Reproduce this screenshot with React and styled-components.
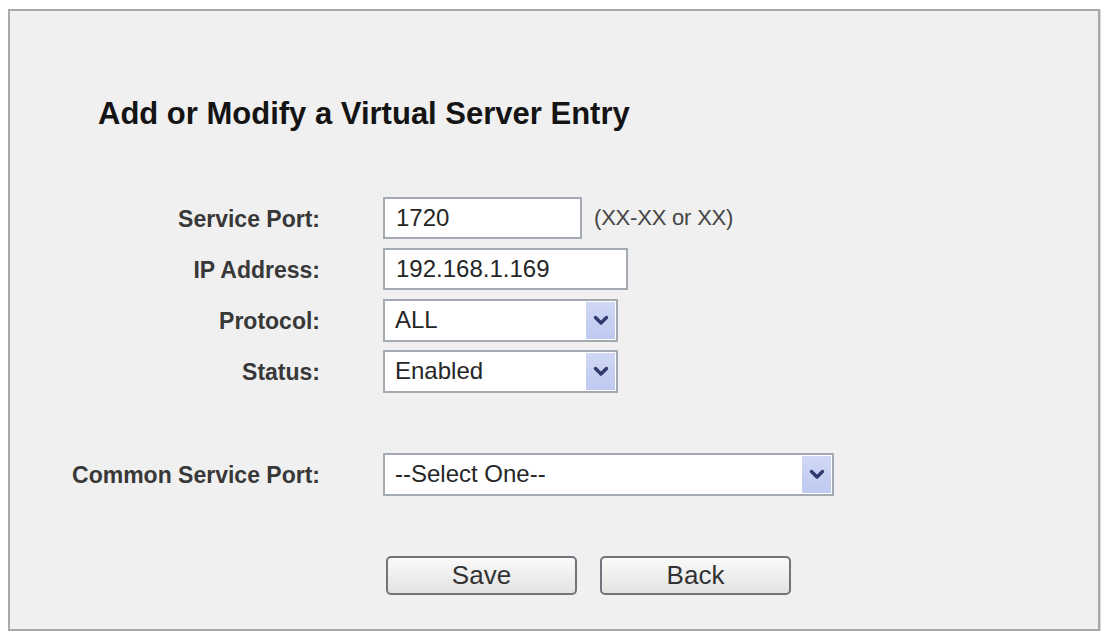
import React from 'react';
import styled, { createGlobalStyle } from 'styled-components';

const GlobalStyle = createGlobalStyle`
  html, body {
    margin: 0;
    padding: 0;
    background: #ffffff;
  }
  body {
    font-family: "Liberation Sans", Arial, sans-serif;
  }
`;

const Chevron = () => (
    <svg width="16" height="11" viewBox="0 0 16 11">
        <polyline points="2.5,2.5 8,8 13.5,2.5" fill="none" stroke="#2c3a6c" strokeWidth="3.4" strokeLinecap="round" strokeLinejoin="round"/>
    </svg>
);

const App = () => {
    return (
        <>
            <GlobalStyle/>
            <Panel>
                <Title>Add or Modify a Virtual Server Entry</Title>
                <Form>
                    <Label>Service Port:</Label>
                    <Field>
                        <TextInput width={199} defaultValue="1720" readOnly/>
                        <Hint>(XX-XX or XX)</Hint>
                    </Field>

                    <Label>IP Address:</Label>
                    <Field>
                        <TextInput width={245} defaultValue="192.168.1.169" readOnly/>
                    </Field>

                    <Label>Protocol:</Label>
                    <Field>
                        <SelectBox width={235}>
                            <SelectValue>ALL</SelectValue>
                            <ArrowButton><Chevron/></ArrowButton>
                        </SelectBox>
                    </Field>

                    <Label>Status:</Label>
                    <Field>
                        <SelectBox width={235}>
                            <SelectValue>Enabled</SelectValue>
                            <ArrowButton><Chevron/></ArrowButton>
                        </SelectBox>
                    </Field>

                    <Label spaced>Common Service Port:</Label>
                    <Field spaced>
                        <SelectBox width={451}>
                            <SelectValue>--Select One--</SelectValue>
                            <ArrowButton><Chevron/></ArrowButton>
                        </SelectBox>
                    </Field>
                </Form>
                <ButtonRow>
                    <Button>Save</Button>
                    <Button>Back</Button>
                </ButtonRow>
            </Panel>
        </>
    )
}
export default App;

const Panel = styled.div`
  box-sizing: border-box;
  margin: 9px 6px 0 8px;
  height: 622px;
  background: #f0f0f0;
  border: 2px solid #a9a9a9;
  box-shadow: 1px 1px 0 #d8d8d8;
  display: flex;
  flex-direction: column;
`;

const Title = styled.h1`
  margin: 85px 0 0 88px;
  font-size: 31px;
  line-height: 36px;
  font-weight: bold;
  color: #141414;
`;

const Form = styled.div`
  margin-top: 65px;
  display: grid;
  grid-template-columns: 310px 1fr;
  column-gap: 63px;
  row-gap: 9px;
`;

const Label = styled.div`
  height: 42px;
  display: flex;
  align-items: center;
  justify-content: flex-end;
  font-size: 23px;
  font-weight: bold;
  color: #383838;
  padding-top: 3px;
  box-sizing: border-box;
  margin-top: ${({spaced}) => (spaced ? '52px' : '0')};
`;

const Field = styled.div`
  height: 42px;
  display: flex;
  align-items: center;
  gap: 12px;
  margin-top: ${({spaced}) => (spaced ? '52px' : '0')};
`;

const TextInput = styled.input`
  box-sizing: border-box;
  width: ${({width}) => width}px;
  height: 42px;
  border: 2px solid #a3aab2;
  background: #ffffff;
  padding: 0 11px;
  font-family: "Liberation Sans", Arial, sans-serif;
  font-size: 24px;
  color: #262626;
  outline: none;
`;

const Hint = styled.span`
  font-size: 22px;
  color: #444444;
  letter-spacing: -0.2px;
`;

const SelectBox = styled.div`
  box-sizing: border-box;
  width: ${({width}) => width}px;
  height: 43px;
  border: 2px solid #a3aab2;
  background: #ffffff;
  display: flex;
  align-items: center;
  justify-content: space-between;
  padding: 1px;
`;

const SelectValue = styled.span`
  padding-left: 9px;
  font-size: 24px;
  color: #262626;
`;

const ArrowButton = styled.div`
  width: 29px;
  height: 37px;
  background: linear-gradient(#d0d8f5, #bfc9f0);
  display: flex;
  align-items: center;
  justify-content: center;
`;

const ButtonRow = styled.div`
  margin-top: 61px;
  padding-left: 376px;
  display: flex;
  gap: 23px;
`;

const Button = styled.button`
  width: 191px;
  height: 39px;
  border: 2px solid #6f757b;
  border-radius: 5px;
  background: linear-gradient(#fafafa, #e3e3e3);
  font-family: "Liberation Sans", Arial, sans-serif;
  font-size: 26px;
  color: #333333;
  cursor: pointer;
  padding: 0;
`;
